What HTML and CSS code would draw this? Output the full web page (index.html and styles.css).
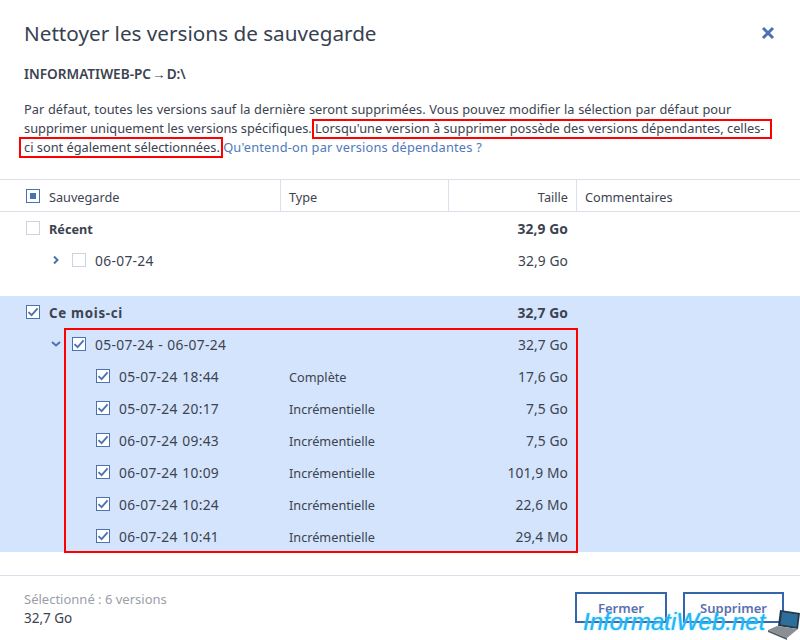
FILE: index.html
```html
<!DOCTYPE html>
<html lang="fr">
<head>
<meta charset="utf-8">
<title>Nettoyer les versions de sauvegarde</title>
<link rel="stylesheet" href="styles.css">
</head>
<body>
<svg class="defs" width="0" height="0"><defs>
<symbol id="tick" viewBox="0 0 14 14"><path d="M2.5 7.2 5.6 10.2 11.6 3.4" fill="none" stroke="#4a72b0" stroke-width="1.800"/></symbol>
</defs></svg>
<main class="dialog">
  <header class="top">
    <h1 class="title">Nettoyer les versions de sauvegarde</h1>
    <svg class="close" width="14" height="14" viewBox="0 0 14 14"><path d="M2 2 12 12M12 2 2 12" stroke="#4a72b0" stroke-width="3"/></svg>
  </header>
  <p class="path">INFORMATIWEB-PC<span class="arrow">→</span>D:\</p>
  <p class="desc"><span class="wide">Par défaut, toutes les versions sauf la dernière seront supprimées. Vous pouvez modifier la sélection par défaut pour</span><br>supprimer uniquement les versions spécifiques. <span class="mark">Lorsqu'une version à supprimer possède des versions dépendantes, celles-</span><br><span class="mark">ci sont également sélectionnées.</span> <a class="link">Qu'entend-on par versions dépendantes ?</a></p>
  <section class="table">
    <div class="row head">
      <div class="c c1"><span class="box partial"><i></i></span><span>Sauvegarde</span></div>
      <div class="c c2 sep">Type</div>
      <div class="c c3 sep">Taille</div>
      <div class="c c4 sep">Commentaires</div>
    </div>
    <div class="group first">
      <div class="row bold"><div class="c c1"><span class="box"></span><span>Récent</span></div><div class="c c2"></div><div class="c c3 num">32,9 Go</div></div>
      <div class="row"><div class="c c1 lvl1"><svg class="chev" width="10" height="10" viewBox="0 0 10 10"><path d="M3 1.5 6.5 5 3 8.5" fill="none" stroke="#4a72b0" stroke-width="2"/></svg><span class="box"></span><span class="date">06-07-24</span></div><div class="c c2"></div><div class="c c3 num">32,9 Go</div></div>
    </div>
    <div class="group sel">
      <div class="row bold"><div class="c c1"><span class="box on"><svg width="14" height="14"><use href="#tick"/></svg></span><span class="spaced">Ce mois-ci</span></div><div class="c c2"></div><div class="c c3 num">32,7 Go</div></div>
      <div class="row"><div class="c c1 lvl1"><svg class="chev" width="10" height="10" viewBox="0 0 10 10"><path d="M1 3 5 6.5 9 3" fill="none" stroke="#4a72b0" stroke-width="2"/></svg><span class="box on"><svg width="14" height="14"><use href="#tick"/></svg></span><span class="date">05-07-24 - 06-07-24</span></div><div class="c c2"></div><div class="c c3 num">32,7 Go</div></div>
      <div class="row"><div class="c c1 lvl2"><span class="box on"><svg width="14" height="14"><use href="#tick"/></svg></span><span class="date">05-07-24 18:44</span></div><div class="c c2">Complète</div><div class="c c3 num">17,6 Go</div></div>
      <div class="row"><div class="c c1 lvl2"><span class="box on"><svg width="14" height="14"><use href="#tick"/></svg></span><span class="date">05-07-24 20:17</span></div><div class="c c2">Incrémentielle</div><div class="c c3 num">7,5 Go</div></div>
      <div class="row"><div class="c c1 lvl2"><span class="box on"><svg width="14" height="14"><use href="#tick"/></svg></span><span class="date">06-07-24 09:43</span></div><div class="c c2">Incrémentielle</div><div class="c c3 num">7,5 Go</div></div>
      <div class="row"><div class="c c1 lvl2"><span class="box on"><svg width="14" height="14"><use href="#tick"/></svg></span><span class="date">06-07-24 10:09</span></div><div class="c c2">Incrémentielle</div><div class="c c3 num">101,9 Mo</div></div>
      <div class="row"><div class="c c1 lvl2"><span class="box on"><svg width="14" height="14"><use href="#tick"/></svg></span><span class="date">06-07-24 10:24</span></div><div class="c c2">Incrémentielle</div><div class="c c3 num">22,6 Mo</div></div>
      <div class="row"><div class="c c1 lvl2"><span class="box on"><svg width="14" height="14"><use href="#tick"/></svg></span><span class="date">06-07-24 10:41</span></div><div class="c c2">Incrémentielle</div><div class="c c3 num">29,4 Mo</div></div>
    </div>
  </section>
  <footer class="foot">
    <div class="summary"><div class="muted">Sélectionné : 6 versions</div><div class="total">32,7 Go</div></div>
    <div class="actions"><button class="btn b1">Fermer</button><button class="btn b2">Supprimer</button></div>
  </footer>
</main>
<div class="redbox r1"></div>
<div class="redbox r2"></div>
<div class="redbox r3"></div>
<div class="wm">InformatiWeb.net</div>
<svg class="laptop" width="32" height="32" viewBox="0 0 32 32"><path d="M12 1 32 4 30 20 10 17Z" fill="#26384a"/><path d="M14 3 30 5.500 28.500 18 12.500 15.500Z" fill="#2c6f9c"/><path d="M9 17 30 20 19 29 0 21Z" fill="#8a8f94"/><path d="M0 21 19 29 19 31 0 23Z" fill="#5b5f63"/></svg>
</body>
</html>
```
FILE: styles.css
```css
* { box-sizing: border-box; }
html, body { margin: 0; padding: 0; }
body {
  width: 800px; height: 640px; overflow: hidden; position: relative; background: #fff;
  font-family: "Noto Sans", "Open Sans", sans-serif; font-size: 12.700px; line-height: 18px; color: #3c4350;
}
.defs { position: absolute; }
.dialog { display: flex; flex-direction: column; height: 640px; }
.top { display: flex; justify-content: space-between; align-items: center; padding: 20px 25px 0 24px; height: 46px; }
.title { margin: 0; font-size: 20.700px; font-weight: 400; line-height: 26px; color: #374150; }
.path { margin: 19px 0 0; padding-left: 24px; font-weight: 600; font-size: 13.600px; line-height: 18px; height: 18px; }
.arrow { margin: 0 1px; }
.desc { margin: 17px 0 0; padding: 0 24px; height: 53px; font-size: 12.800px; line-height: 19px; white-space: nowrap; }
.wide { word-spacing: 0.4px; }
.link { color: #4f78bd; letter-spacing: 0.2px; }
.table { margin-top: 26px; border-top: 1px solid #dbdfea; }
.row { display: flex; height: 32px; align-items: center; }
.head { border-bottom: 1px solid #dbdfea; height: 32px; }
.c { padding: 2px 8px 0; display: flex; align-items: center; height: 100%; white-space: nowrap; }
.c1 { width: 280px; padding-left: 26px; gap: 9px; }
.c2 { width: 168px; padding-left: 9px; }
.c2.sep { padding-left: 8px; }
.c3 { width: 128px; justify-content: flex-end; }
.c4 { flex: 1; }
.sep { border-left: 1px solid #dbdfea; }
.bold { font-weight: 700; }
.num { font-size: 13.800px; letter-spacing: 0.1px; }
.date { font-size: 13.800px; letter-spacing: 0.32px; word-spacing: 0.5px; }
.spaced { font-size: 13.300px; letter-spacing: 0.7px; }
.lvl1 { padding-left: 51px; }
.lvl1 .chev { margin-right: 2px; margin-top: -2px; }
.lvl2 { padding-left: 96px; }
.box { width: 14px; height: 14px; flex: none; margin-top: -2px; border: 1px solid #cdd3e0; background: #fff; display: flex; align-items: center; justify-content: center; }
.box.on, .box.partial { border-color: #4a72b0; }
.box svg { flex: none; margin: -1px; }
.partial i { width: 6px; height: 6px; background: #4a72b0; }
.first { height: 84px; }
.sel { background: #d4e4fc; height: 256px; }
.foot { margin-top: 23px; border-top: 1px solid #dbdfea; flex: 1; display: flex; justify-content: space-between; padding: 14px 16px 0 24px; font-size: 13px; }
.muted { color: #9a9ea6; }
.total { font-size: 13.500px; margin-top: 1px; }
.actions { display: flex; gap: 16px; padding-top: 2px; }
.btn { height: 31px; border: 2px solid #3566ab; background: #fff; font: 600 13px/18px "Noto Sans", sans-serif; color: #5a6fae; padding: 0; }
.b1 { width: 92px; }
.b2 { width: 101px; }
.redbox { position: absolute; border: 2px solid #f00; }
.r1 { left: 312px; top: 119px; width: 460px; height: 20px; }
.r2 { left: 19px; top: 137px; width: 204px; height: 21px; }
.r3 { left: 64px; top: 328px; width: 514px; height: 225px; }
.wm { position: absolute; left: 583px; top: 607px; font: italic 24px/30px "Liberation Sans", sans-serif; color: #20b4f6; text-shadow: 0 0 2px #6fd4ff; }
.laptop { position: absolute; left: 768px; top: 609px; }
```
